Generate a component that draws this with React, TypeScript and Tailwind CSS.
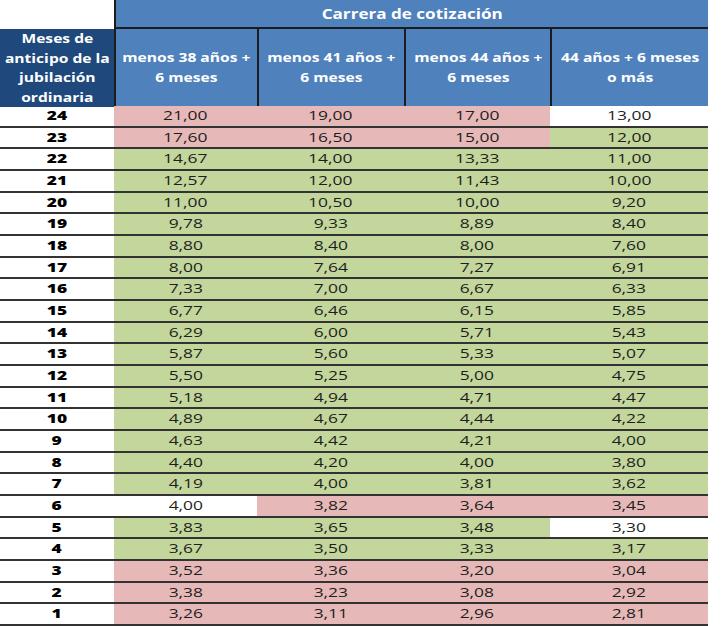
import React from 'react';

type Fill = 'p' | 'g' | 'w';

interface Row {
  mes: number;
  values: string[];
  fills: Fill[];
}

const raw: [number, string, string, string, string, string][] = [
  [24, '21,00', '19,00', '17,00', '13,00', 'pppw'],
  [23, '17,60', '16,50', '15,00', '12,00', 'pppg'],
  [22, '14,67', '14,00', '13,33', '11,00', 'gggg'],
  [21, '12,57', '12,00', '11,43', '10,00', 'gggg'],
  [20, '11,00', '10,50', '10,00', '9,20', 'gggg'],
  [19, '9,78', '9,33', '8,89', '8,40', 'gggg'],
  [18, '8,80', '8,40', '8,00', '7,60', 'gggg'],
  [17, '8,00', '7,64', '7,27', '6,91', 'gggg'],
  [16, '7,33', '7,00', '6,67', '6,33', 'gggg'],
  [15, '6,77', '6,46', '6,15', '5,85', 'gggg'],
  [14, '6,29', '6,00', '5,71', '5,43', 'gggg'],
  [13, '5,87', '5,60', '5,33', '5,07', 'gggg'],
  [12, '5,50', '5,25', '5,00', '4,75', 'gggg'],
  [11, '5,18', '4,94', '4,71', '4,47', 'gggg'],
  [10, '4,89', '4,67', '4,44', '4,22', 'gggg'],
  [9, '4,63', '4,42', '4,21', '4,00', 'gggg'],
  [8, '4,40', '4,20', '4,00', '3,80', 'gggg'],
  [7, '4,19', '4,00', '3,81', '3,62', 'gggg'],
  [6, '4,00', '3,82', '3,64', '3,45', 'wppp'],
  [5, '3,83', '3,65', '3,48', '3,30', 'gggw'],
  [4, '3,67', '3,50', '3,33', '3,17', 'gggg'],
  [3, '3,52', '3,36', '3,20', '3,04', 'pppp'],
  [2, '3,38', '3,23', '3,08', '2,92', 'pppp'],
  [1, '3,26', '3,11', '2,96', '2,81', 'pppp'],
];

const rows: Row[] = raw.map(([mes, a, b, c, d, f]) => ({
  mes,
  values: [a, b, c, d],
  fills: f.split('') as Fill[],
}));

const fillClass: Record<Fill, string> = {
  p: 'bg-[#e6b9b8]',
  g: 'bg-[#c3d69b]',
  w: 'bg-white',
};

const cols = 'grid grid-cols-[114px_143px_147px_146px_158px]';

// texto ancho como en la captura original (Calibri estirada)
const Wide = ({ children, k = 'n' }: { children: React.ReactNode; k?: 'n' | 'h' | 't' }) => (
  <span
    className={
      k === 'n'
        ? 'inline-block scale-x-[1.45]'
        : k === 'h'
          ? 'inline-block scale-x-[1.3]'
          : 'inline-block scale-x-[1.22]'
    }
  >
    {children}
  </span>
);

const subHeaders = [
  ['menos 38 años +', '6 meses'],
  ['menos 41 años +', '6 meses'],
  ['menos 44 años +', '6 meses'],
  ['44 años + 6 meses', 'o más'],
];

export default function App() {
  return (
    <div className="w-[727px] h-[626px] bg-white overflow-hidden font-['Open_Sans',sans-serif]">
      <div className="w-[708px]">
        {/* cabecera */}
        <div className={`${cols} h-[29px]`}>
          <div className="bg-white" />
          <div className="col-span-4 bg-[#4f81bd] border-l-2 border-b-2 border-[#1c1c1c] flex items-center justify-center text-white font-bold text-[14px] leading-none">
            <Wide k="t">Carrera de cotización</Wide>
          </div>
        </div>
        <div className={`${cols} h-[77px] border-b-2 border-[#1c1c1c]`}>
          <div className="bg-[#1f497d] flex items-center justify-center text-center text-white font-bold text-[12px] leading-[19.5px]">
            <Wide k="h">
              Meses de
              <br />
              anticipo de la
              <br />
              jubilación
              <br />
              ordinaria
            </Wide>
          </div>
          {subHeaders.map((h, i) => (
            <div
              key={i}
              className="bg-[#4f81bd] border-l-2 border-[#1c1c1c] flex items-center justify-center text-center text-white font-bold text-[12px] leading-[20px]"
            >
              <Wide k="h">
                {h[0]}
                <br />
                {h[1]}
              </Wide>
            </div>
          ))}
        </div>

        {/* datos */}
        <div className="h-[520px] flex flex-col">
          {rows.map((r) => (
            <div key={r.mes} className={`${cols} flex-1 border-b-2 border-[#333333]`}>
              <div className="flex items-center justify-center font-extrabold text-[12px] text-black">
                <Wide>{r.mes}</Wide>
              </div>
              {r.values.map((v, i) => (
                <div
                  key={i}
                  className={`${fillClass[r.fills[i]]} flex items-center justify-center font-medium text-[12px] text-[#1e1e1e]`}
                >
                  <Wide>{v}</Wide>
                </div>
              ))}
            </div>
          ))}
        </div>
      </div>
    </div>
  );
}
